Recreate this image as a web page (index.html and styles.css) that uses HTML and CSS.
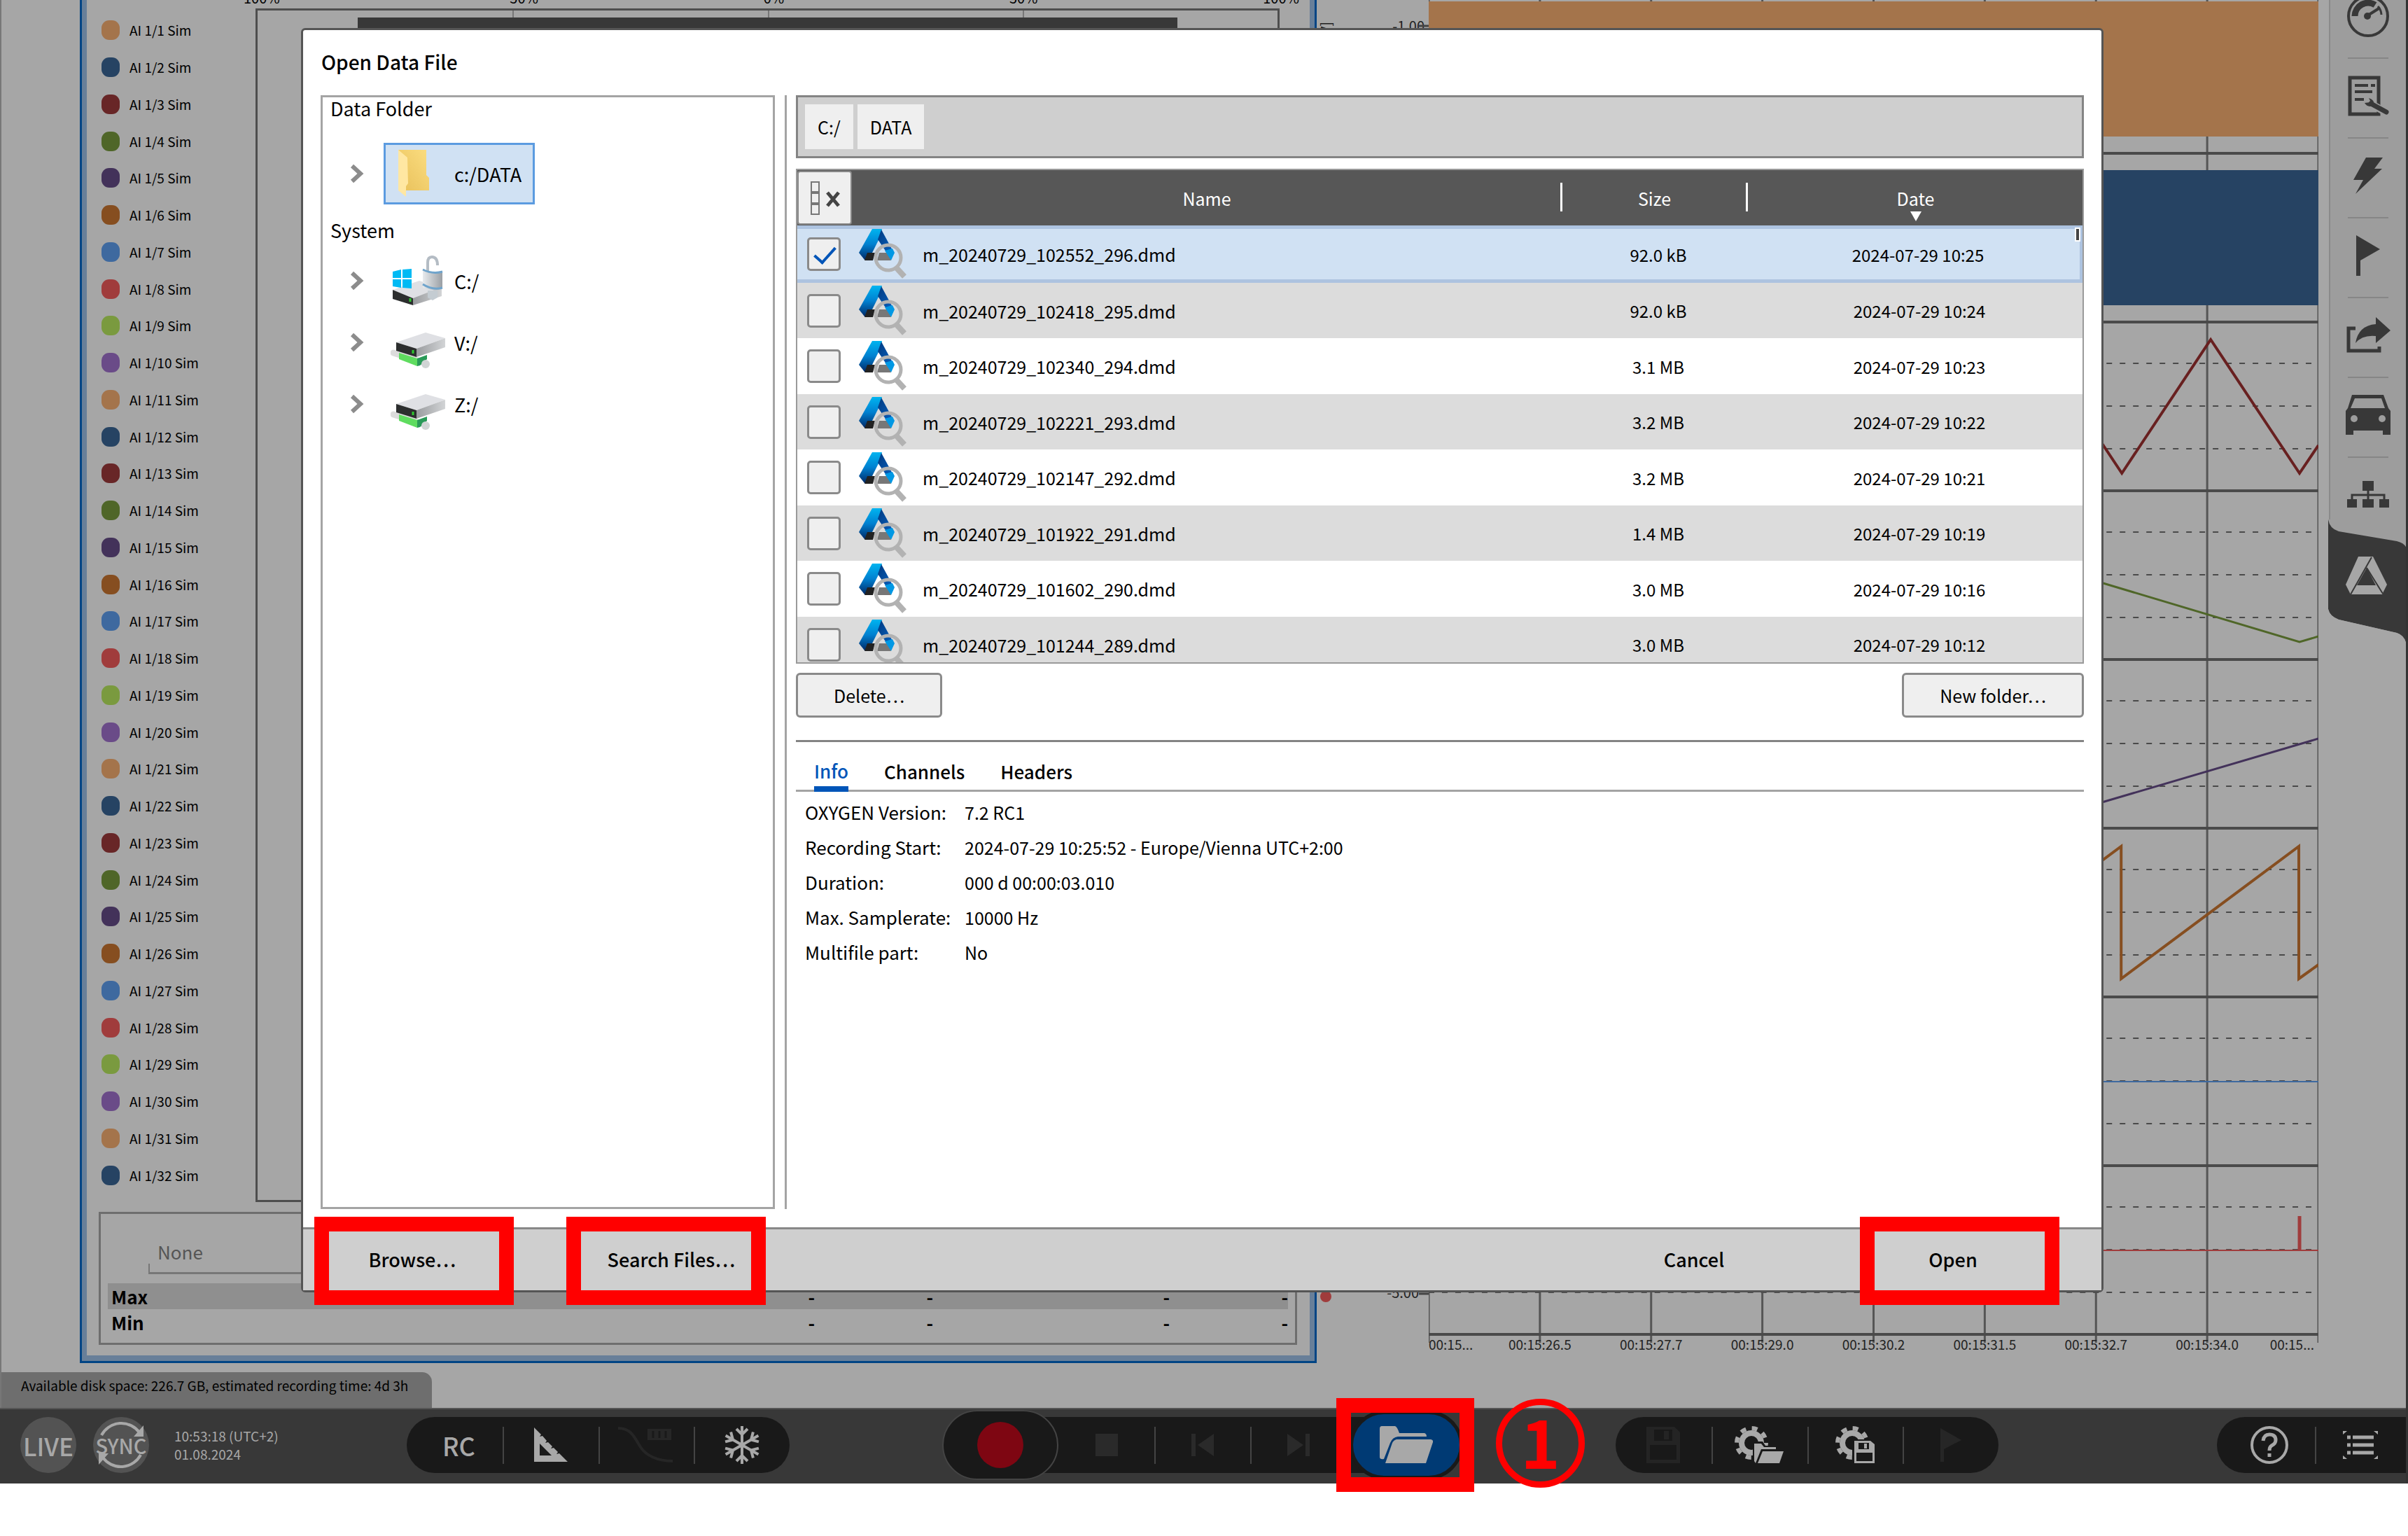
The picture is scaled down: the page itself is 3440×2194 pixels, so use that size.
FILE: index.html
```html
<!DOCTYPE html>
<html lang="en">
<head>
    <meta charset="UTF-8">
    <meta name="viewport" content="width=device-width, initial-scale=1.0">
    <title>Open Data File</title>
    <link rel="stylesheet" href="styles.css">
</head>
<body>
    <!-- shared icons -->
    <svg class="defs" width="0" height="0" aria-hidden="true">
        <defs>
            <linearGradient id="limb" x1="0" y1="0" x2="0" y2="1">
                <stop offset="0" stop-color="#00b4f0"/>
                <stop offset="0.5" stop-color="#0080d0"/>
                <stop offset="1" stop-color="#002a68"/>
            </linearGradient>
            <linearGradient id="limb2" x1="0" y1="0" x2="1" y2="1">
                <stop offset="0" stop-color="#003a80"/>
                <stop offset="1" stop-color="#0a66c8"/>
            </linearGradient>
            <linearGradient id="folderBack" x1="0" y1="1" x2="1" y2="0">
                <stop offset="0" stop-color="#e8c05a"/>
                <stop offset="1" stop-color="#fbdd80"/>
            </linearGradient>
            <linearGradient id="metal" x1="0" y1="0" x2="1" y2="0">
                <stop offset="0" stop-color="#9a9c9f"/>
                <stop offset="1" stop-color="#d2d4d6"/>
            </linearGradient>
            <linearGradient id="lock" x1="0" y1="0" x2="1" y2="0">
                <stop offset="0" stop-color="#e8ebee"/>
                <stop offset="1" stop-color="#9a9fa4"/>
            </linearGradient>
        </defs>
        <symbol id="i-file" viewBox="0 0 70 72">
            <path d="M19 0H33L30 12L14 44H8L0 34Z" fill="url(#limb)"/>
            <path d="M32 1L50 34L44 40L27 15Z" fill="url(#limb2)"/>
            <path d="M12 34H23L20 45H8Z" fill="#222"/>
            <path d="M29 34H42L46 45H26Z" fill="#777"/>
            <path d="M37 31L48 28L51 34L46 45Z" fill="#0098e4"/>
            <circle cx="42" cy="41" r="18" fill="none" stroke="#b2b2b2" stroke-width="5"/>
            <path d="M54 56L65 68" stroke="#b2b2b2" stroke-width="8"/>
        </symbol>
        <symbol id="i-chev" viewBox="0 0 20 28">
            <path d="M3 3L15 14L3 25" fill="none" stroke="#8c8c8c" stroke-width="6"/>
        </symbol>
        <symbol id="i-folder" viewBox="0 0 44 67">
            <path d="M0 0H40V36L44 40V58H8Z" fill="url(#folderBack)"/>
            <path d="M0 0L13 11L14 48L11 52V67L0 58Z" fill="#ffe7a2"/>
        </symbol>
        <symbol id="i-netdrive" viewBox="0 0 80 54">
            <path d="M4 29L48 43" stroke="#dcdcdc" stroke-width="9" stroke-linecap="round"/>
            <path d="M12 29L38 37V48L12 38Z" fill="#5fdc5f"/>
            <path d="M38 37L52 32V38L42 47L38 48Z" fill="#2a9a58"/>
            <circle cx="50" cy="45" r="6" fill="#d0d4d4"/>
            <path d="M8 14L50 0L78 8L37 23Z" fill="#dfe0e4"/>
            <path d="M8 14L37 23V35L8 26Z" fill="#2c2e2e"/>
            <path d="M37 23L78 8V21L37 35Z" fill="url(#metal)"/>
            <path d="M32 25V30" stroke="#2ec82e" stroke-width="3"/>
        </symbol>
        <symbol id="i-windrive" viewBox="0 0 74 72">
            <path d="M0 49L38 36L70 46L29 61Z" fill="#dfe0e4"/>
            <path d="M0 49L29 61V71L0 62Z" fill="#2c2e2e"/>
            <path d="M29 61L70 45V58L29 71Z" fill="url(#metal)"/>
            <path d="M25 61V66" stroke="#2ec82e" stroke-width="3"/>
            <path d="M0 23L12 20V32H0ZM14 20L27 19V32H14ZM0 34H12V46L0 44ZM14 34H27V47L14 46Z" fill="#00baf4"/>
            <path d="M50 22V10Q50 2 56 2Q64 2 64 14" fill="none" stroke="#b4bcc4" stroke-width="4"/>
            <path d="M43 20Q57 26 71 22V47Q57 52 43 46Z" fill="url(#lock)"/>
            <path d="M43 20Q57 27 71 23M43 41Q57 50 71 46" fill="none" stroke="#6fa4cc" stroke-width="3"/>
            <path d="M50 50H64V60L57 64L50 60Z" fill="#c4ccd2"/>
        </symbol>
        <symbol id="i-gear" viewBox="0 0 50 50">
            <circle cx="24" cy="24" r="14" fill="none" stroke="#a8a8a8" stroke-width="8"/>
            <circle cx="24" cy="24" r="21" fill="none" stroke="#a8a8a8" stroke-width="6" stroke-dasharray="8 8.5"/>
        </symbol>
    </svg>

    <div class="app">
        <div class="workspace">
            <!-- bar meter instrument -->
            <section class="meter">
                <div class="meter-top">
                    <ul class="channels" id="channels"></ul>
                    <div class="bargraph">
                        <div class="scale"><span>-100%</span><span>-50%</span><span>0%</span><span>50%</span><span>100%</span></div>
                        <div class="bars">
                            <div class="ticks"><i></i><i></i><i></i><i></i></div>
                            <div class="bar"></div>
                        </div>
                    </div>
                </div>
                <div class="stats">
                    <div class="combo">
                        <input class="combo-input" type="text" value="None" aria-label="Statistics">
                        <div class="combo-line"></div>
                    </div>
                    <table class="minmax">
                        <tr><th scope="row">Max</th><td>-</td><td>-</td><td></td><td>-</td><td>-</td></tr>
                        <tr><th scope="row">Min</th><td>-</td><td>-</td><td></td><td>-</td><td>-</td></tr>
                    </table>
                </div>
            </section>

            <!-- recorder instrument -->
            <section class="recorder">
                <svg class="yaxis" viewBox="0 0 160 1906">
                    <text x="154" y="45" text-anchor="end">-1.00</text>
                    <text x="146" y="1854" text-anchor="end">-5.00</text>
                    <path d="M146 37H160M146 1848H160" stroke="#444" stroke-width="3"/>
                    <text transform="translate(21 31) rotate(-90)" text-anchor="end">AI 1/1 Sim [V]</text>
                    <circle cx="13" cy="1852" r="8" fill="#a03c3c"/>
                </svg>
                <div class="plot">
                    <svg class="traces" viewBox="0 0 1272 1918" preserveAspectRatio="none" id="traces"></svg>
                    <div class="times">
                        <span>00:15...</span><span>00:15:26.5</span><span>00:15:27.7</span><span>00:15:29.0</span><span>00:15:30.2</span><span>00:15:31.5</span><span>00:15:32.7</span><span>00:15:34.0</span><span>00:15...</span>
                    </div>
                </div>
            </section>

            <nav class="sidebar">
                <button class="side-item" aria-label="Instruments">
                    <svg width="64" height="64" viewBox="0 0 64 64"><circle cx="32" cy="32" r="28" fill="none" stroke="#383838" stroke-width="4"/><path d="M13 32A19 19 0 0 1 42 16" fill="none" stroke="#383838" stroke-width="9"/><path d="M30 32L49 20" stroke="#383838" stroke-width="4"/><path d="M46 18A19 19 0 0 1 51 30" fill="none" stroke="#383838" stroke-width="3"/><circle cx="31" cy="32" r="5" fill="#383838"/></svg>
                </button>
                <button class="side-item" aria-label="Properties">
                    <svg width="64" height="60" viewBox="0 0 64 60"><path d="M6 4H47V56H6Z" fill="none" stroke="#383838" stroke-width="5"/><path d="M13 15H32M36 15H42M13 24H38M13 35H26" stroke="#383838" stroke-width="4"/><path d="M33 40L59 54" stroke="#9d9d9d" stroke-width="11"/><path d="M36 41L58 53" stroke="#383838" stroke-width="7" stroke-linecap="round"/><path d="M27 40Q32 48 40 43Q42 36 33 33L36 39Z" fill="#383838"/></svg>
                </button>
                <button class="side-item" aria-label="Triggers">
                    <svg width="46" height="54" viewBox="0 0 46 54"><path d="M20 1H44L32 17H43L5 53L16 33H2Z" fill="#383838"/></svg>
                </button>
                <button class="side-item" aria-label="Markers">
                    <svg width="34" height="58" viewBox="0 0 34 58"><path d="M0 0L34 20L6 36V58H0Z" fill="#383838"/></svg>
                </button>
                <button class="side-item" aria-label="Export">
                    <svg width="64" height="54" viewBox="0 0 64 54"><path d="M14 17H4V49H48V43" fill="none" stroke="#383838" stroke-width="5"/><path d="M14 38Q18 13 43 11V1L64 20L43 38V28Q24 26 14 38Z" fill="#383838"/></svg>
                </button>
                <button class="side-item" aria-label="Vehicle">
                    <svg width="66" height="58" viewBox="0 0 66 58"><path d="M10 0H55L62 19L65 23V57H54V51H12V57H1V23L4 19ZM14 5L8 19H57L52 5Z" fill="#383838" fill-rule="evenodd"/><ellipse cx="13" cy="34" rx="5" ry="5" fill="#9d9d9d"/><ellipse cx="53" cy="34" rx="5" ry="5" fill="#9d9d9d"/></svg>
                </button>
                <button class="side-item side-last" aria-label="Network">
                    <svg width="60" height="38" viewBox="0 0 60 38"><path d="M22 0H38V14H22ZM0 26H14V38H0ZM22 26H38V38H22ZM46 26H60V38H46Z" fill="#383838"/><path d="M30 12V26M7 26V20H53V26" fill="none" stroke="#383838" stroke-width="3"/></svg>
                </button>
                <button class="side-tab" aria-label="System">
                    <svg width="112" height="180" viewBox="0 0 112 180"><path d="M0 180V0Q2 13 15 17L98 31Q110 34 112 42V180Q110 166 98 162L15 143Q2 138 0 128Z" fill="#383838"/><path d="M0 128Q2 138 15 143L98 162Q110 166 112 180H0Z" fill="#a6a6a6"/><path d="M43 53H64L84 93L77 107H32L25 93ZM55 69L41 94H68Z" fill="#a6a6a6" fill-rule="evenodd"/><path d="M32 107L62 54M55 69L78 106" stroke="#383838" stroke-width="2"/></svg>
                </button>
            </nav>

            <div class="disk">Available disk space: 226.7 GB, estimated recording time: 4d 3h</div>

            <div class="overlay">
                <div class="dialog" role="dialog" aria-labelledby="dlg-title">
                    <h1 id="dlg-title">Open Data File</h1>
                    <div class="panes">
                        <div class="tree">
                            <h2>Data Folder</h2>
                            <div class="node">
                                <svg class="chev"><use href="#i-chev"/></svg>
                                <button class="place selected"><svg class="picon" viewBox="0 0 80 72"><use href="#i-folder" x="10" y="2" width="44" height="67"/></svg>c:/DATA</button>
                            </div>
                            <h2 class="second">System</h2>
                            <div class="node">
                                <svg class="chev"><use href="#i-chev"/></svg>
                                <button class="place"><svg class="picon" viewBox="0 0 80 72"><use href="#i-windrive" x="2" y="0" width="74" height="72"/></svg>C:/</button>
                            </div>
                            <div class="node">
                                <svg class="chev"><use href="#i-chev"/></svg>
                                <button class="place"><svg class="picon" viewBox="0 0 80 72"><use href="#i-netdrive" x="-1" y="22" width="80" height="54"/></svg>V:/</button>
                            </div>
                            <div class="node">
                                <svg class="chev"><use href="#i-chev"/></svg>
                                <button class="place"><svg class="picon" viewBox="0 0 80 72"><use href="#i-netdrive" x="-1" y="22" width="80" height="54"/></svg>Z:/</button>
                            </div>
                        </div>
                        <div class="content">
                            <div class="crumbs">
                                <button>C:/</button><button>DATA</button>
                            </div>
                            <div class="files">
                                <table>
                                    <colgroup><col class="c-check"><col><col class="c-size"><col class="c-date"></colgroup>
                                    <thead>
                                        <tr>
                                            <th class="unselect"><button aria-label="Clear selection"><svg width="46" height="50" viewBox="0 0 46 50"><path d="M3 2H14V16H3ZM3 18H14V32H3ZM3 34H14V48H3Z" fill="none" stroke="#777" stroke-width="2"/><path d="M26 17L42 36M42 17L26 36" stroke="#444" stroke-width="5"/></svg></button></th>
                                            <th>Name</th>
                                            <th class="sep">Size</th>
                                            <th class="sep sorted">Date</th>
                                        </tr>
                                    </thead>
                                    <tbody id="file-rows"></tbody>
                                </table>
                                <span class="scroll"></span>
                            </div>
                            <div class="actions">
                                <button class="btn">Delete…</button>
                                <button class="btn">New folder…</button>
                            </div>
                            <div class="tabs">
                                <button class="tab active">Info</button>
                                <button class="tab">Channels</button>
                                <button class="tab">Headers</button>
                            </div>
                            <dl class="info">
                                <dt>OXYGEN Version:</dt><dd>7.2 RC1</dd>
                                <dt>Recording Start:</dt><dd>2024-07-29 10:25:52 - Europe/Vienna UTC+2:00</dd>
                                <dt>Duration:</dt><dd>000 d 00:00:03.010</dd>
                                <dt>Max. Samplerate:</dt><dd>10000 Hz</dd>
                                <dt>Multifile part:</dt><dd>No</dd>
                            </dl>
                        </div>
                    </div>
                    <div class="footer">
                        <button>Browse…</button>
                        <button>Search Files…</button>
                        <button class="push">Cancel</button>
                        <button>Open</button>
                        <span class="mark mark-browse"></span>
                        <span class="mark mark-search"></span>
                        <span class="mark mark-open"></span>
                    </div>
                </div>
            </div>
        </div>

        <div class="toolbar">
            <div class="status">
                <button class="round live">LIVE</button>
                <button class="round sync">
                    <svg viewBox="0 0 80 80" width="80" height="80"><path d="M12 26A32 32 0 0 1 66 22M68 54A32 32 0 0 1 14 58" fill="none" stroke="#a8a8a8" stroke-width="4"/><path d="M72 12V28H58ZM8 68V52H22Z" fill="#a8a8a8"/></svg>
                    <span>SYNC</span>
                </button>
                <div class="clock">10:53:18 (UTC+2)<br>01.08.2024</div>
            </div>
            <div class="pill">
                <button class="rc">RC</button>
                <button aria-label="Measure"><svg width="50" height="50" viewBox="0 0 50 50"><path d="M2 0L12 10L10 13L14 12L20 19L18 22L22 21L28 27L26 30L30 29L36 35L34 38L38 37L50 49H2ZM10 23V40H27Z" fill="#a8a8a8" fill-rule="evenodd"/></svg></button>
                <button aria-label="Digits" disabled><svg width="80" height="54" viewBox="0 0 80 54"><path d="M0 3C20 3 24 18 32 30S56 50 78 50" fill="none" stroke="#262626" stroke-width="4"/><path d="M42 4H76V20H42Z" fill="#262626"/><path d="M50 7V17M59 7V17M68 7V17" stroke="#191919" stroke-width="3"/></svg></button>
                <button aria-label="Freeze"><svg width="54" height="54" viewBox="0 0 54 54" fill="none" stroke="#a8a8a8" stroke-width="4"><g id="arm"><path d="M27 27V0M19 4L27 12L35 4"/></g><use href="#arm" transform="rotate(60 27 27)"/><use href="#arm" transform="rotate(120 27 27)"/><use href="#arm" transform="rotate(180 27 27)"/><use href="#arm" transform="rotate(240 27 27)"/><use href="#arm" transform="rotate(300 27 27)"/></svg></button>
            </div>
            <div class="transport">
                <button class="record" aria-label="Record"><span></span></button>
                <div class="strip">
                    <button aria-label="Stop" disabled><svg width="32" height="32"><path d="M0 0H32V32H0Z" fill="#2a2a2a"/></svg></button>
                    <button aria-label="Previous" disabled><svg width="32" height="32"><path d="M0 0H6V32H0ZM32 0V32L9 16Z" fill="#2a2a2a"/></svg></button>
                    <button aria-label="Next" disabled><svg width="32" height="32"><path d="M26 0H32V32H26ZM0 0V32L23 16Z" fill="#2a2a2a"/></svg></button>
                </div>
                <button class="open-file" aria-label="Open file"><svg width="76" height="54" viewBox="0 0 76 54"><path d="M3 0H22Q25 1 28 10H64Q67 11 67 15H26Q18 16 15 24L6 47Q0 48 0 44V4Q0 0 3 0Z" fill="#a8a8a8"/><path d="M24 19H73Q77 20 76 23L66 53H8L18 24Q20 20 24 19Z" fill="#a8a8a8"/></svg></button>
                <span class="mark mark-file"></span>
                <span class="step">1</span>
            </div>
            <div class="pill">
                <button aria-label="Save" disabled><svg width="48" height="52" viewBox="0 0 48 52"><path d="M0 0H40L48 8V52H0ZM11 4V20H37V4ZM5 26V47H43V26Z" fill="#242424" fill-rule="evenodd"/><path d="M25 6H32V18H25Z" fill="#242424"/></svg></button>
                <button aria-label="Load setup"><svg width="70" height="54" viewBox="0 0 70 54"><use href="#i-gear" width="50" height="50"/><path d="M26 53V22H40L44 28H62V34H68V53Z" fill="#191919"/><path d="M28 50V25H38L42 30H59V33H38L30 53Z" fill="#a8a8a8"/><path d="M40 36H70L64 53H33Z" fill="#a8a8a8"/></svg></button>
                <button aria-label="Save setup"><svg width="56" height="54" viewBox="0 0 56 54"><use href="#i-gear" width="50" height="50"/><path d="M24 19H56V54H24Z" fill="#191919"/><path d="M27 21H50L56 26V53H27ZM33 24V33H48V24ZM30 38V50H53V38Z" fill="#a8a8a8" fill-rule="evenodd"/><path d="M41 25H45V32H41Z" fill="#a8a8a8"/></svg></button>
                <button aria-label="Add marker" disabled><svg width="30" height="48" viewBox="0 0 30 48"><path d="M0 0L30 17L5 30V48H0Z" fill="#262626"/></svg></button>
            </div>
            <div class="pill pill-end">
                <button aria-label="Help"><svg width="54" height="54" viewBox="0 0 54 54" fill="none" stroke="#a8a8a8"><circle cx="27" cy="27" r="25" stroke-width="4"/><path d="M18 21Q19 12 27 12Q36 12 36 20Q36 25 30 28Q27 30 27 35" stroke-width="5"/><path d="M27 39V44" stroke-width="5"/></svg></button>
                <button aria-label="Menu"><svg width="50" height="40" viewBox="0 0 50 40"><path d="M14 9H44M14 20H44M14 31H44M6 9H11M6 20H11M6 31H11" stroke="#a8a8a8" stroke-width="5"/><path d="M0 0H6L0 5ZM50 0H44L50 5ZM0 40H6L0 35ZM50 40H44L50 35Z" fill="#a8a8a8"/></svg></button>
            </div>
        </div>
    </div>

    <script>
        // channel legend, colors repeat every ten channels
        const colors = ['#a4744b', '#264363', '#682627', '#4f6628', '#43325a', '#864e20', '#3e699f', '#a03c3c', '#7a9a3f', '#6a4b88'];
        const channels = document.getElementById('channels');
        for (let i = 1; i <= 32; i++) {
            const li = document.createElement('li');
            li.innerHTML = `<i style="background:${colors[(i - 1) % 10]}"></i>AI 1/${i} Sim`;
            channels.appendChild(li);
        }

        // data files, newest first
        const files = [
            ['m_20240729_102552_296.dmd', '92.0 kB', '2024-07-29 10:25'],
            ['m_20240729_102418_295.dmd', '92.0 kB', '2024-07-29 10:24'],
            ['m_20240729_102340_294.dmd', '3.1 MB', '2024-07-29 10:23'],
            ['m_20240729_102221_293.dmd', '3.2 MB', '2024-07-29 10:22'],
            ['m_20240729_102147_292.dmd', '3.2 MB', '2024-07-29 10:21'],
            ['m_20240729_101922_291.dmd', '1.4 MB', '2024-07-29 10:19'],
            ['m_20240729_101602_290.dmd', '3.0 MB', '2024-07-29 10:16'],
            ['m_20240729_101244_289.dmd', '3.0 MB', '2024-07-29 10:12']
        ];
        document.getElementById('file-rows').innerHTML = files.map((f, i) => `
            <tr class="${i === 0 ? 'selected' : ''}">
                <td class="check"><input type="checkbox" aria-label="${f[0]}" ${i === 0 ? 'checked' : ''}></td>
                <td class="name"><div><svg><use href="#i-file"/></svg>${f[0]}</div></td>
                <td>${f[1]}</td>
                <td>${f[2]}</td>
            </tr>`).join('');

        // recorder: 8 lanes of 241px, time grid every 159px
        let svg = '';
        for (let i = 0; i <= 8; i++) {
            svg += `<path d="M${i * 159} 0V1918" stroke="#555" stroke-width="3"/>`;
        }
        for (let i = 0; i < 8; i++) {
            const top = -23 + i * 241;
            svg += `<path d="M0 ${top + 242}H1272" stroke="#4a4a4a" stroke-width="4"/>`;
            if (i > 1) {
                for (const y of [60, 121, 182]) {
                    svg += `<path d="M0 ${top + y}H1272" stroke="#4a4a4a" stroke-width="2" stroke-dasharray="8 11"/>`;
                }
            }
        }
        svg += '<path d="M0 2H1272V195H0Z" fill="#a4744b"/><path d="M0 243H1272V436H0Z" fill="#264363"/>';
        const trace = (color, width, d) => {
            svg += `<path d="${d}" fill="none" stroke="${color}" stroke-width="${width}"/>`;
        };
        trace('#682020', 4, 'M864 485L991 676L1118 485L1245 676L1272 636');
        trace('#4f6628', 3, 'M864 803L1245 917L1272 909');
        trace('#43325a', 3, 'M864 1175L1272 1055');
        trace('#864e20', 4, 'M735 1398L990 1209V1398L1244 1209V1398L1272 1378');
        trace('#3e699f', 2, 'M0 1545H1272');
        trace('#a03c3c', 2, 'M0 1786H1272');
        trace('#a03c3c', 5, 'M1245 1737V1786');
        document.getElementById('traces').innerHTML = svg;
    </script>
</body>
</html>
```
FILE: styles.css
```css
* {
    box-sizing: border-box;
}
body {
    margin: 0;
    min-height: 100vh;
    background: #fff;
    color: #000;
    font-family: "Noto Sans CJK SC", "Noto Sans", sans-serif;
    font-size: 25px;
}
button {
    font: inherit;
    color: inherit;
    border: none;
    background: none;
    padding: 0;
    cursor: pointer;
}
svg {
    display: block;
}
.defs {
    position: absolute;
}
.app {
    display: flex;
    flex-direction: column;
    height: calc(100vh - 75px);
    border-right: 3px solid #333;
}
.workspace {
    position: relative;
    flex: 1;
    min-height: 0;
    display: flex;
    background: #a6a6a6;
    border-left: 2px solid #777;
    overflow: hidden;
}

/* bar meter */
.meter {
    width: 1767px;
    margin: 0 0 64px 112px;
    padding: 0 14px 23px 14px;
    border: 3px solid #004484;
    border-top: none;
    box-shadow: inset 7px -8px 0 #687f99, inset -7px 0 0 #687f99;
    display: flex;
    flex-direction: column;
}
.meter-top {
    flex: 1;
    display: flex;
    padding: 0 36px 14px 0;
}
.channels {
    list-style: none;
    margin: 17px 0 12px;
    padding: 0 0 0 14px;
    width: 234px;
    display: grid;
    grid-auto-rows: 1fr;
    font-size: 19px;
    line-height: 24px;
}
.channels li {
    display: flex;
    align-items: center;
    gap: 14px;
}
.channels i {
    width: 26px;
    height: 28px;
    border-radius: 11px;
}
.bargraph {
    flex: 1;
    display: flex;
    flex-direction: column;
}
.scale {
    display: flex;
    justify-content: space-between;
    margin: -14px -28px 0 -24px;
    height: 26px;
    font-size: 20px;
    line-height: 22px;
}
.bars {
    flex: 1;
    border: 3px solid #4e4e4e;
}
.ticks {
    display: grid;
    grid-template-columns: repeat(4, 1fr);
    height: 10px;
}
.ticks i + i {
    border-left: 2px solid #777;
}
.bar {
    height: 1400px;
    margin: 0 143px;
    background: #383838;
}
.stats {
    border: 3px solid #6e6e6e;
    height: 190px;
    margin: 0 11px 0 10px;
    padding: 35px 10px 0;
    display: flex;
    flex-direction: column;
    gap: 13px;
}
.combo {
    margin-left: 58px;
}
.combo-input {
    display: block;
    width: 600px;
    height: 36px;
    padding: 0 13px;
    border: none;
    background: none;
    font: inherit;
    font-size: 26px;
    color: #555;
}
.combo-line {
    height: 15px;
    border-left: 2px solid #777;
    border-bottom: 3px solid #777;
}
.minmax {
    width: 100%;
    border-collapse: collapse;
    table-layout: fixed;
    font-weight: 700;
    font-size: 26px;
    line-height: 37px;
}
.minmax th {
    padding: 0 5px;
    text-align: left;
}
.minmax td {
    width: 169px;
    padding: 0;
    text-align: right;
}
.minmax tr:first-child {
    background: #8f8f8f;
}

/* recorder */
.recorder {
    flex: 1;
    display: flex;
}
.yaxis {
    width: 160px;
    height: 1906px;
    font-size: 20px;
    fill: #222;
}
.plot {
    flex: 1;
    margin-right: 15px;
}
.traces {
    width: 100%;
    height: 1918px;
}
.times {
    display: grid;
    grid-template-columns: 1fr repeat(7, 2fr) 1fr;
    margin-top: -10px;
    font-size: 19px;
    line-height: 24px;
    text-align: center;
    color: #222;
    white-space: nowrap;
}
.times span:first-child {
    text-align: left;
}
.times span:last-child {
    padding-right: 6px;
    text-align: right;
}

/* right sidebar */
.sidebar {
    width: 110px;
    flex: none;
    margin-top: -30px;
    display: flex;
    flex-direction: column;
    align-items: center;
}
.side-item {
    position: relative;
    width: 100%;
    height: 114px;
    flex: none;
    display: flex;
    align-items: center;
    justify-content: center;
    padding-bottom: 8px;
    background: #9d9d9d;
    border-left: 2px solid #8a8a8a;
}
.side-item::after {
    content: "";
    position: absolute;
    left: 25px;
    right: 25px;
    bottom: 0;
    height: 2px;
    background: #868686;
}
.side-last {
    height: 88px;
    padding: 16px 0 0;
}
.side-last::after {
    display: none;
}
.side-tab {
    background: #9d9d9d;
}

/* disk tab in the lower left corner */
.disk {
    position: absolute;
    left: 0;
    bottom: 0;
    height: 51px;
    padding: 7px 34px 0 28px;
    background: #6e6e6e;
    border-top-right-radius: 14px;
    font-size: 19px;
    line-height: 24px;
}

/* dialog */
.overlay {
    position: absolute;
    inset: 0;
    padding: 40px 432px 165px 428px;
    display: flex;
}
.dialog {
    flex: 1;
    display: flex;
    flex-direction: column;
    background: #fff;
    border: 3px solid #555;
    border-radius: 6px;
}
.dialog h1 {
    margin: 0;
    padding: 25px 26px 0;
    height: 93px;
    font-size: 28px;
    line-height: 40px;
    font-weight: 500;
}
.panes {
    flex: 1;
    display: flex;
    padding: 0 25px 26px;
}
.tree {
    width: 649px;
    border: 3px solid #a4a4a4;
    font-size: 27px;
}
.tree h2 {
    margin: 0;
    padding-left: 11px;
    height: 65px;
    font-size: 27px;
    line-height: 32px;
    font-weight: 400;
}
.tree .second {
    padding-top: 21px;
}
.node {
    height: 88px;
    padding-left: 39px;
    display: flex;
    align-items: center;
    gap: 28px;
}
.chev {
    width: 20px;
    height: 28px;
}
.place {
    height: 88px;
    padding: 0 16px 0 8px;
    display: flex;
    align-items: center;
    gap: 10px;
    border: 3px solid transparent;
}
.place.selected {
    background: #d0e1f3;
    border-color: #5b9be0;
}
.picon {
    width: 80px;
    height: 72px;
    overflow: visible;
}
.content {
    flex: 1;
    margin-left: 14px;
    padding-left: 13px;
    border-left: 3px solid #a4a4a4;
}
.crumbs {
    display: flex;
    gap: 6px;
    height: 90px;
    padding: 10px;
    border: 3px solid #848484;
    background: #cfcfcf;
}
.crumbs button {
    padding: 0 18px;
    background: #efefef;
}
.files {
    position: relative;
    height: 707px;
    margin-top: 15px;
    border: 2px solid #9a9a9a;
    overflow: hidden;
}
.files table {
    width: 100%;
    table-layout: fixed;
    border-spacing: 0;
}
.c-check {
    width: 80px;
}
.c-size {
    width: 265px;
}
.c-date {
    width: 481px;
}
.files th {
    position: relative;
    height: 79px;
    padding: 0;
    background: #575757;
    color: #fff;
    font-weight: 400;
}
.files .sep {
    padding-left: 4px;
}
.files .sep::before {
    content: "";
    position: absolute;
    left: 0;
    top: 18px;
    width: 3px;
    height: 41px;
    background: #fff;
}
.files .sorted::after {
    content: "";
    position: absolute;
    left: 50%;
    bottom: 6px;
    margin-left: -6px;
    border: 8px solid transparent;
    border-top: 14px solid #fff;
    border-bottom: none;
}
.unselect button {
    display: block;
    width: 78px;
    height: 77px;
    padding-left: 15px;
    background: #efefef;
    border: 2px solid #888;
    border-radius: 4px;
}
.files td {
    height: 79px;
    padding: 0 0 0 15px;
    font-size: 24px;
    text-align: center;
}
.files tr:nth-child(odd) td {
    height: 80px;
}
.files tr:nth-child(even) td {
    background: #dcdcdc;
}
.files .selected td {
    background: #d0e1f3;
    border: solid #adc3e0;
    border-width: 5px 0;
}
.files .selected td:last-child {
    border-right-width: 4px;
}
.files .check {
    padding: 0;
}
.check input {
    appearance: none;
    display: block;
    position: relative;
    width: 48px;
    height: 48px;
    margin: 0 0 0 14px;
    background: #efefef;
    border: 3px solid #8a8a8a;
    border-radius: 5px;
}
.check input:checked::after {
    content: "";
    position: absolute;
    left: 14px;
    top: 4px;
    width: 13px;
    height: 26px;
    border: solid #0055b8;
    border-width: 0 4px 4px 0;
    transform: rotate(42deg);
}
.files .name {
    padding-left: 8px;
    font-size: 25px;
}
.name div {
    display: flex;
    align-items: center;
    gap: 21px;
}
.name svg {
    width: 70px;
    height: 72px;
    flex: none;
}
.scroll {
    position: absolute;
    right: 3px;
    top: 82px;
    width: 8px;
    height: 20px;
    border: 2px solid #fff;
    background: #444;
}
.actions {
    display: flex;
    justify-content: space-between;
    margin-top: 13px;
}
.btn {
    height: 64px;
    padding: 0 51px;
    background: #efefef;
    border: 3px solid #8a8a8a;
    border-radius: 6px;
}
.tabs {
    display: flex;
    gap: 51px;
    height: 74px;
    margin-top: 32px;
    padding: 17px 26px 0;
    border-top: 3px solid #848484;
    border-bottom: 3px solid #a4a4a4;
}
.tab {
    height: 54px;
    padding-bottom: 6px;
    font-size: 26px;
    font-weight: 500;
}
.tab.active {
    color: #0055b8;
    padding-bottom: 0;
    border-bottom: 8px solid #0055b8;
}
.info {
    display: grid;
    grid-template-columns: 228px 1fr;
    margin: 4px 0 0;
    padding-left: 13px;
    line-height: 50px;
}
.info dt {
    font-size: 26px;
}
.info dd {
    margin: 0;
}
.footer {
    position: relative;
    display: flex;
    gap: 112px;
    height: 90px;
    padding: 0 83px 0 27px;
    background: #cfcfcf;
    border-top: 3px solid #888;
}
.footer button {
    width: 258px;
    padding-bottom: 3px;
    font-size: 27px;
    font-weight: 500;
}
.footer .push {
    margin-left: auto;
}

/* highlight frames over the controls */
.mark {
    position: absolute;
    border: 21px solid #f00;
    pointer-events: none;
}
.mark-browse, .mark-search, .mark-open {
    top: -18px;
    width: 285px;
    height: 126px;
}
.mark-browse {
    left: 16px;
}
.mark-search {
    left: 376px;
}
.mark-open {
    right: 60px;
}
.mark-file {
    left: 563px;
    top: -15px;
    width: 197px;
    height: 134px;
}
.step {
    position: absolute;
    left: 791px;
    top: -14px;
    width: 127px;
    height: 127px;
    border: 9px solid #f00;
    border-radius: 50%;
    color: #f00;
    font-weight: 700;
    font-size: 96px;
    line-height: 100px;
    text-align: center;
}
.mark, .step {
    z-index: 2;
}

/* bottom toolbar */
.toolbar {
    height: 108px;
    display: flex;
    align-items: center;
    gap: 218px;
    padding-bottom: 4px;
    background: #383838;
    border-top: 2px solid #555;
}
.status {
    display: flex;
    align-items: center;
    width: 363px;
    padding-left: 29px;
    gap: 24px;
    color: #a8a8a8;
}
.round {
    position: relative;
    width: 80px;
    height: 80px;
    flex: none;
    border-radius: 50%;
    background: #535353;
    font-weight: 500;
}
.live {
    font-size: 35px;
}
.sync {
    font-size: 29px;
}
.sync svg, .sync span {
    position: absolute;
    inset: 0;
}
.sync span {
    line-height: 80px;
}
.clock {
    margin-left: 12px;
    font-size: 19px;
    line-height: 26px;
    white-space: nowrap;
}
.pill {
    display: flex;
    width: 547px;
    height: 80px;
    border-radius: 40px;
    background: #191919;
}
.pill button, .strip button {
    position: relative;
    flex: 1;
    display: flex;
    align-items: center;
    justify-content: center;
}
.pill button + button::before, .strip button + button::before {
    content: "";
    position: absolute;
    left: 0;
    top: 14px;
    width: 2px;
    height: 53px;
    background: #444;
}
.pill .rc {
    text-indent: 12px;
    color: #a8a8a8;
    font-size: 36px;
    font-weight: 500;
}
.transport {
    position: relative;
    display: flex;
    align-items: center;
    width: 744px;
    height: 104px;
}
.record {
    width: 166px;
    height: 100px;
    display: flex;
    align-items: center;
    justify-content: center;
    border: 2px solid #444;
    border-radius: 50px;
    background: #191919;
    z-index: 1;
}
.record span {
    width: 66px;
    height: 66px;
    border-radius: 50%;
    background: #7e0612;
}
.strip {
    flex: 1;
    display: flex;
    height: 80px;
    padding: 0 25px 0 20px;
    margin: 0 -20px;
    background: #191919;
}
.open-file {
    width: 162px;
    height: 98px;
    display: flex;
    align-items: center;
    justify-content: center;
    border: 5px solid #191919;
    border-radius: 49px;
    background: #003a74;
    z-index: 1;
}
.pill-end {
    width: 270px;
    margin-left: auto;
    padding-left: 10px;
    border-radius: 40px 0 0 40px;
}
```
